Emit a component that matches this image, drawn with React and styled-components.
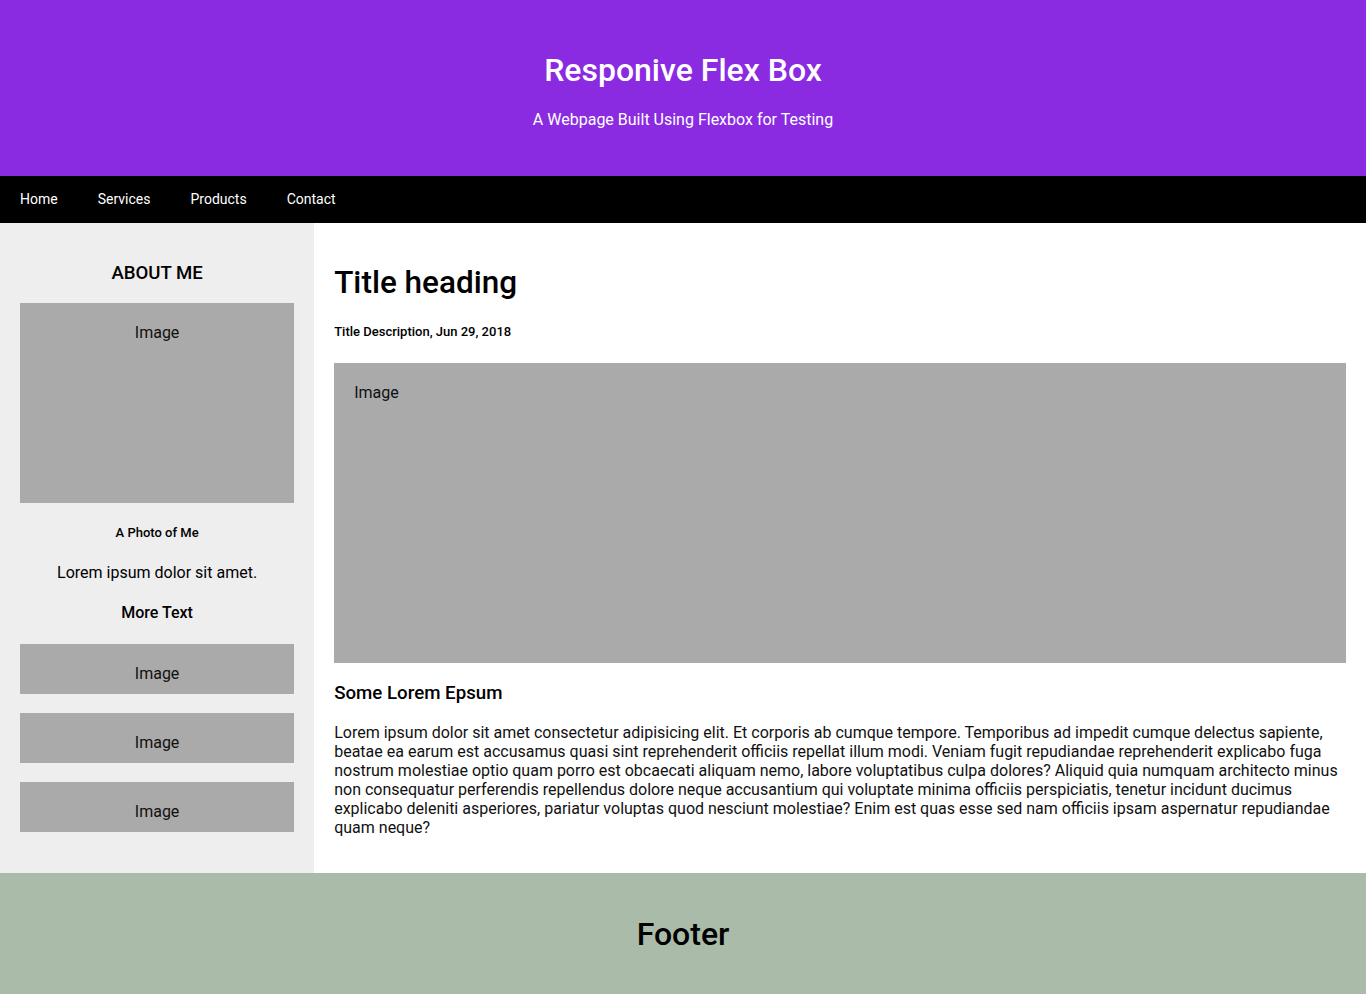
import React from "react";
import styled, { createGlobalStyle } from "styled-components";

const GlobalStyle = createGlobalStyle`
  * {
    box-sizing: border-box;
  }

  body {
    margin: 0;
    font-family: Roboto, "Liberation Sans", Arial, sans-serif;
    color: #000;
    background: #fff;
  }
`;

const paragraph = `Lorem ipsum dolor sit amet consectetur adipisicing elit. Et corporis ab cumque tempore. Temporibus ad impedit cumque delectus sapiente, beatae ea earum est accusamus quasi sint reprehenderit officiis repellat illum modi. Veniam fugit repudiandae reprehenderit explicabo fuga nostrum molestiae optio quam porro est obcaecati aliquam nemo, labore voluptatibus culpa dolores? Aliquid quia numquam architecto minus non consequatur perferendis repellendus dolore neque accusantium qui voluptate minima officiis perspiciatis, tenetur incidunt ducimus explicabo deleniti asperiores, pariatur voluptas quod nesciunt molestiae? Enim est quas esse sed nam officiis ipsam aspernatur repudiandae quam neque?`;

const navLinks = ["Home", "Services", "Products", "Contact"];

function App() {
  return (
    <>
      <GlobalStyle />
      <Header>
        <h1>Responive Flex Box</h1>
        <p>A Webpage Built Using Flexbox for Testing</p>
      </Header>

      <Navbar>
        {navLinks.map((link) => (
          <NavLink key={link} href={`#${link.toLowerCase()}`}>
            {link}
          </NavLink>
        ))}
      </Navbar>

      <Row>
        <Side>
          <SideTitle>ABOUT ME</SideTitle>
          <ImageBox $height={200} $center>
            Image
          </ImageBox>
          <Caption>A Photo of Me</Caption>
          <SideText>Lorem ipsum dolor sit amet.</SideText>
          <MoreText>More Text</MoreText>
          <SmallImages>
            <ImageBox $height={50} $center>
              Image
            </ImageBox>
            <ImageBox $height={50} $center>
              Image
            </ImageBox>
            <ImageBox $height={50} $center>
              Image
            </ImageBox>
          </SmallImages>
        </Side>

        <Main>
          <PostTitle>Title heading</PostTitle>
          <PostMeta>Title Description, Jun 29, 2018</PostMeta>
          <ImageBox $height={300}>Image</ImageBox>
          <SubTitle>Some Lorem Epsum</SubTitle>
          <Body>{paragraph}</Body>
        </Main>
      </Row>

      <Footer>
        <h2>Footer</h2>
      </Footer>
    </>
  );
}

const Header = styled.header`
  background-color: #8a2be2;
  color: #fff;
  text-align: center;
  padding: 31px 30px;

  h1 {
    font-size: 32px;
    font-weight: 500;
    line-height: 37px;
    margin: 21px 0;
  }

  p {
    font-size: 16px;
    line-height: 19px;
    margin: 16px 0;
  }
`;

const Navbar = styled.nav`
  display: flex;
  background-color: #000;
`;

const NavLink = styled.a`
  color: #fff;
  text-decoration: none;
  font-size: 14px;
  line-height: 17px;
  padding: 15px 20px;
`;

const Row = styled.div`
  display: flex;
`;

const Side = styled.aside`
  flex: 0 0 23%;
  background-color: #eee;
  padding: 20px;
  text-align: center;
`;

const SideTitle = styled.h2`
  font-size: 18.6px;
  font-weight: 500;
  line-height: 23px;
  margin: 19px 0 18px;
`;

const ImageBox = styled.div`
  background-color: #aaa;
  height: ${(p) => p.$height}px;
  padding: 20px;
  font-size: 16px;
  line-height: 19px;
  color: #111;
  text-align: ${(p) => (p.$center ? "center" : "left")};
`;

const Caption = styled.h5`
  font-size: 13px;
  font-weight: 500;
  line-height: 16px;
  margin: 22px 0;
`;

const SideText = styled.p`
  font-size: 16px;
  line-height: 19px;
  margin: 22px 0 21px;
`;

const MoreText = styled.h3`
  font-size: 16px;
  font-weight: 500;
  line-height: 19px;
  margin: 21px 0 22px;
`;

const SmallImages = styled.div`
  display: flex;
  flex-direction: column;
  gap: 19px;
`;

const Main = styled.main`
  flex: 1;
  background-color: #fff;
  padding: 20px;
`;

const PostTitle = styled.h2`
  font-size: 31.5px;
  font-weight: 500;
  line-height: 36px;
  margin: 22px 0 23px;
`;

const PostMeta = styled.h5`
  font-size: 13px;
  font-weight: 500;
  line-height: 16px;
  margin: 23px 0 23px;
`;

const SubTitle = styled.h3`
  font-size: 18.7px;
  font-weight: 500;
  line-height: 22px;
  margin: 19px 0 19px;
`;

const Body = styled.p`
  font-size: 16px;
  line-height: 19px;
  margin: 0 0 16px;
  color: #111;
`;

const Footer = styled.footer`
  background-color: #aabbaa;
  text-align: center;
  padding: 43px 20px 42px;

  h2 {
    font-size: 32px;
    font-weight: 500;
    line-height: 37px;
    margin: 0;
  }
`;

export default App;
